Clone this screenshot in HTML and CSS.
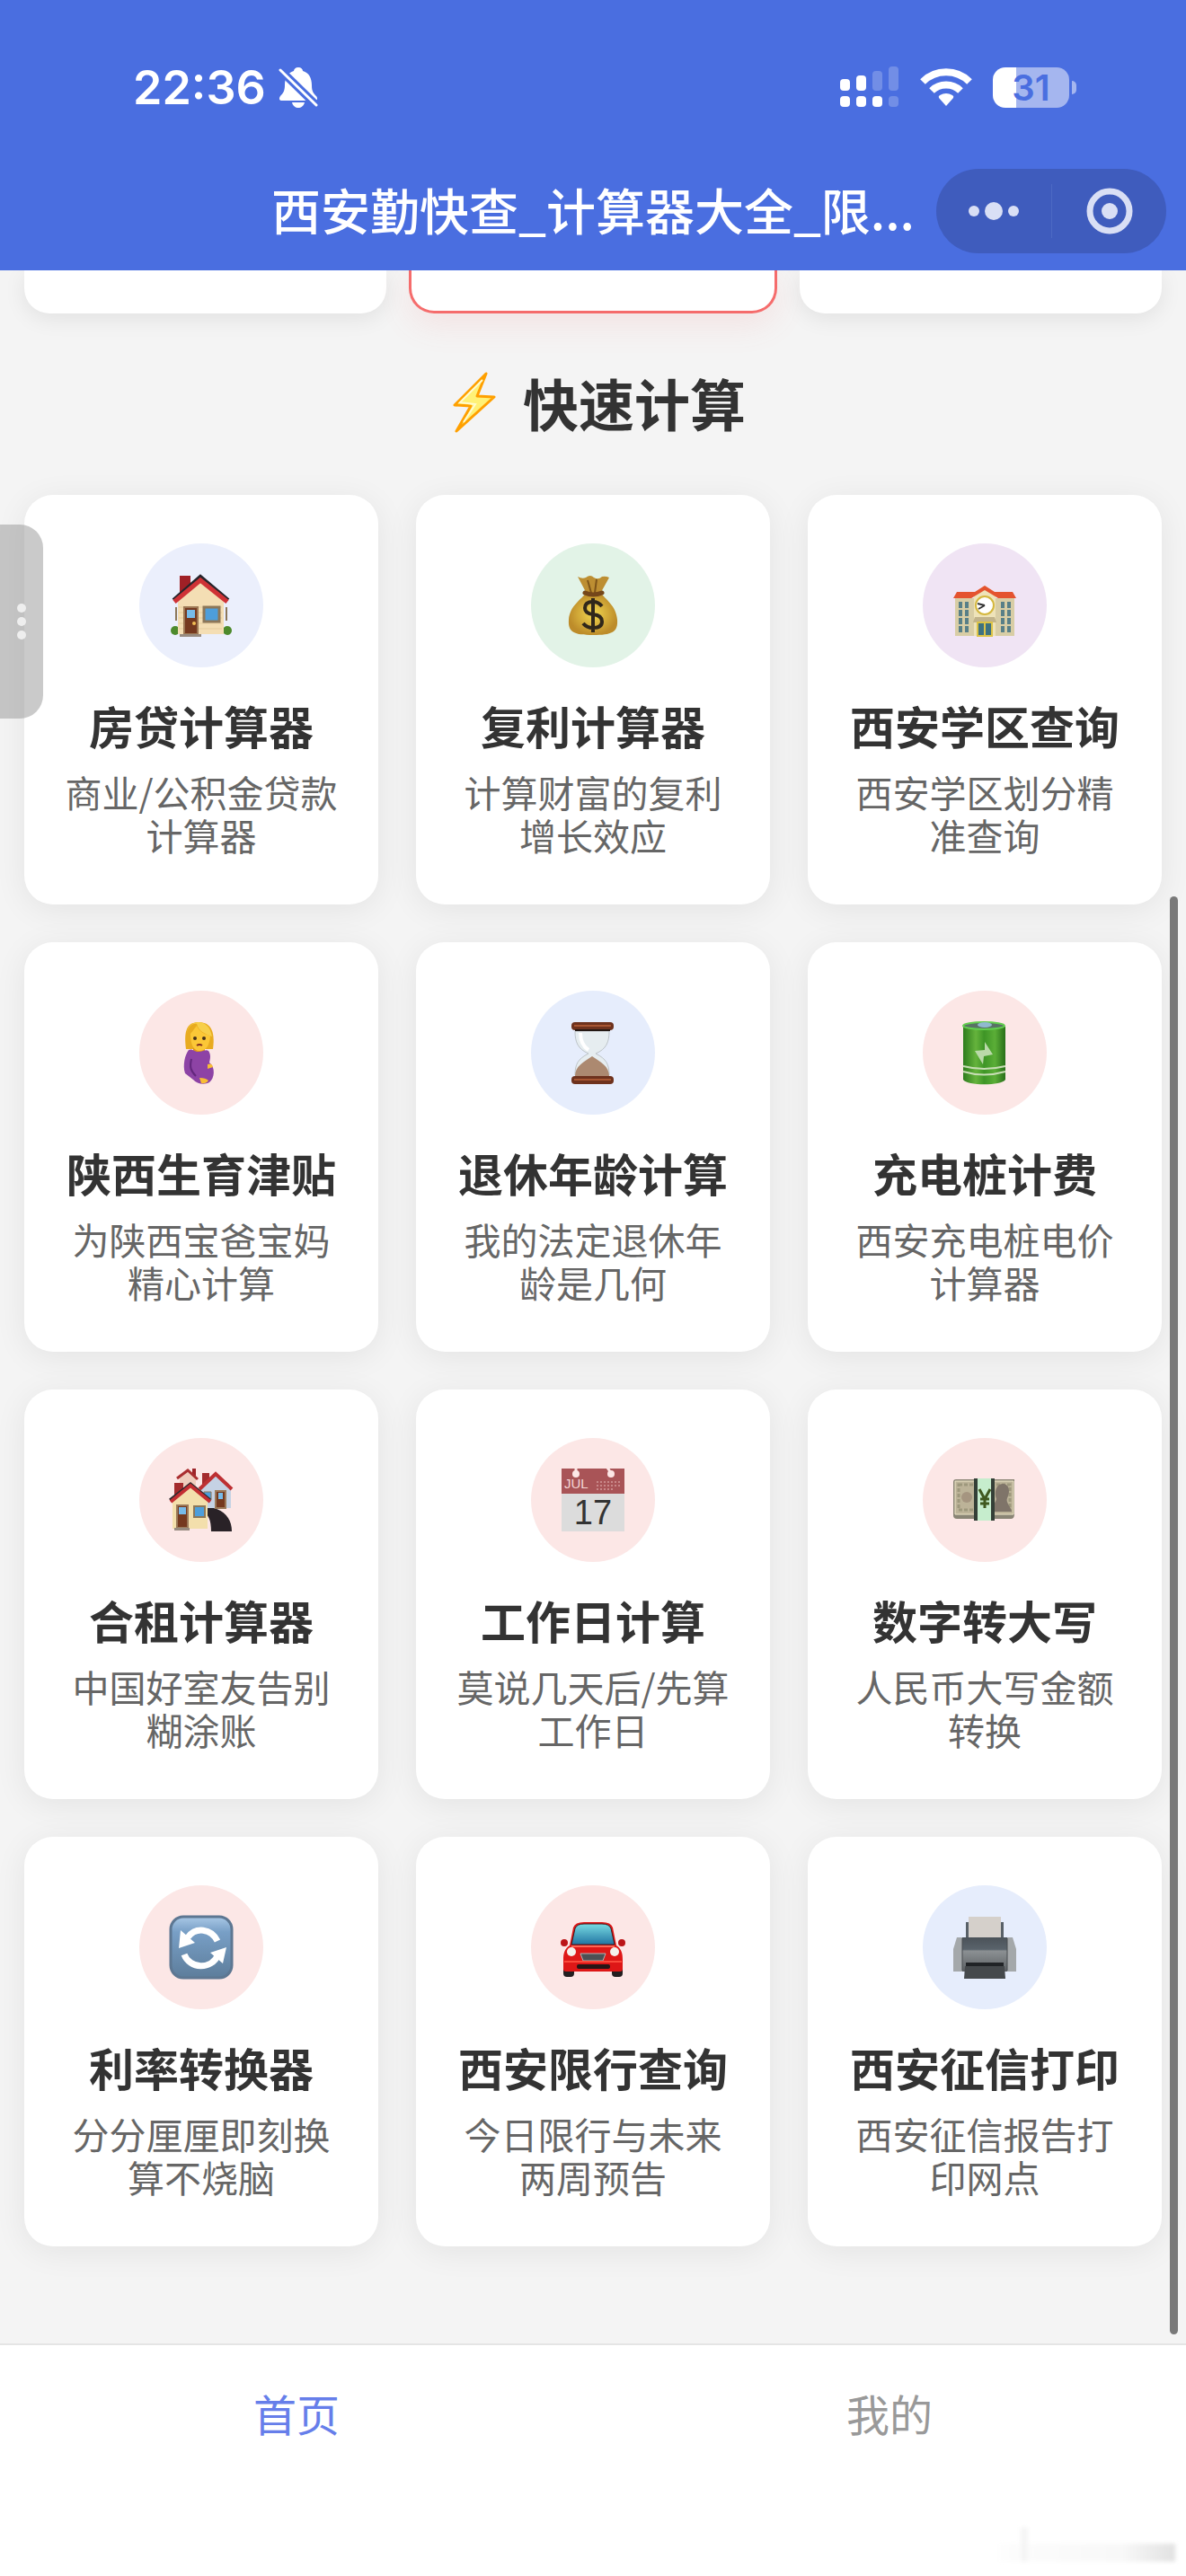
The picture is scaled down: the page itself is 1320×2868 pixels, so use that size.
FILE: index.html
```
<!DOCTYPE html>
<html lang="zh-CN">
<head>
  <meta charset="UTF-8">
  <meta name="viewport" content="width=device-width, initial-scale=1.0">
  <title>西安勤快查_计算器大全</title>
  <link rel="stylesheet" href="styles.css">
</head>
<body>

  <!-- Header -->
  <header>
    <div class="status-bar">
      <div class="status-left">
        <span class="time">22:36</span>
        <svg class="bell" viewBox="0 0 44 46">
          <path fill="#fff" d="M22 1c3 0 5 2 5 4 7 2 10 8 10 16 0 7 2 9 5 12 2 3 1 5-2 5H4c-3 0-4-2-2-5 3-3 5-6 5-12 0-8 3-14 10-16 0-2 2-4 5-4z"/>
          <path fill="#fff" d="M15 40h14c-1 4-4 6-7 6s-6-2-7-6z"/>
          <path stroke="#4a6ee0" stroke-width="9" d="M0 2l44 43"/>
          <path stroke="#fff" stroke-width="3" stroke-linecap="round" d="M2 4l40 39"/>
        </svg>
      </div>
      <div class="status-right">
        <svg class="signal" viewBox="0 0 66 46">
          <g fill="#fff">
            <rect x="0" y="14" width="11" height="13" rx="4"/>
            <rect x="18" y="10" width="11" height="17" rx="4"/>
            <rect x="0" y="33" width="11" height="12" rx="4"/>
            <rect x="18" y="33" width="11" height="12" rx="4"/>
            <rect x="36" y="33" width="11" height="12" rx="4"/>
          </g>
          <g fill="#fff" opacity=".22">
            <rect x="36" y="5" width="11" height="22" rx="4"/>
            <rect x="54" y="0" width="11" height="27" rx="4"/>
            <rect x="54" y="33" width="11" height="12" rx="4"/>
          </g>
        </svg>
        <svg class="wifi" viewBox="0 0 58 42">
          <g fill="none" stroke="#fff" stroke-width="8">
            <path d="M3 15a37 37 0 0 1 52 0"/>
            <path d="M13 25a23 23 0 0 1 32 0"/>
          </g>
          <path fill="#fff" d="M29 42l-8-9q-1-2 1-3 7-4 14 0 2 1 1 3z"/>
        </svg>
        <div class="battery"><span>31</span></div>
      </div>
    </div>
    <div class="nav-bar">
      <h1>西安勤快查_计算器大全_限...</h1>
      <div class="capsule">
        <button aria-label="更多">
          <svg viewBox="0 0 56 56" fill="#d9dff5"><circle cx="6" cy="28" r="6"/><circle cx="28" cy="28" r="10"/><circle cx="50" cy="28" r="6"/></svg>
        </button>
        <button aria-label="关闭">
          <svg viewBox="0 0 56 56"><circle cx="28" cy="28" r="22" fill="none" stroke="#d9dff5" stroke-width="7"/><circle cx="28" cy="28" r="9" fill="#d9dff5"/></svg>
        </button>
      </div>
    </div>
  </header>

  <main>
    <div class="top-cards">
      <div class="top-card"></div>
      <div class="top-card active"></div>
      <div class="top-card"></div>
    </div>

    <h2>
      <svg viewBox="0 0 48 68">
        <path d="M37 2L2 37l18 1L4 66l42-38-19-1z" fill="#fff176" stroke="#ffa000" stroke-width="3" stroke-linejoin="round"/>
        <path d="M33 9L8 34l17 2-13 20" fill="none" stroke="#fffbd0" stroke-width="2"/>
      </svg>
      <span>快速计算</span>
    </h2>

    <!-- Calculator list -->
    <section class="card-grid">
      <a href="#" class="card">
        <span class="icon indigo">
          <svg viewBox="0 0 72 72">
            <circle cx="7" cy="64" r="5" fill="#4d8a2c"/><circle cx="65" cy="64" r="5" fill="#4d8a2c"/>
            <path d="M12 3h12v22H12z" fill="#a02026"/>
            <path d="M10 27L35 6l26 22v40H10z" fill="#f4deb4"/>
            <path d="M11 38h48M11 44h48M11 50h48M11 56h48M11 62h48" stroke="#e5cc9c" stroke-width="1"/>
            <path d="M5 30L35 4l31 26" fill="none" stroke="#26242b" stroke-width="4"/>
            <path d="M6 32L35 8l30 24" fill="none" stroke="#cf3236" stroke-width="5"/>
            <path d="M17 38h15v30H17z" fill="#75391f" stroke="#9c7754" stroke-width="2"/>
            <path d="M20 41h9v9h-9z" fill="#77bbe9"/><circle cx="28" cy="56" r="2" fill="#f1bd55"/>
            <path d="M39 38h17v16H39z" fill="#4d9edb" stroke="#8c7759" stroke-width="3"/>
            <path d="M8 38v15M64 38v15" stroke="#8c7759" stroke-width="2"/>
            <path d="M12 68h24v3H12z" fill="#978b80"/>
          </svg>
        </span>
        <h3>房贷计算器</h3>
        <p>商业/公积金贷款计算器</p>
      </a>
      <a href="#" class="card">
        <span class="icon green">
          <svg viewBox="0 0 72 72">
            <defs><radialGradient id="bag"><stop offset="0" stop-color="#f3d84f"/><stop offset="1" stop-color="#bd8c2a"/></radialGradient></defs>
            <path d="M19 4q5 3 9 1 5-4 9 0 5 3 9-1 4-1 8 1l-10 18H29z" fill="#bd8e32"/>
            <path d="M30 8l4 14M40 7l-2 15" stroke="#7e5419" stroke-width="2"/>
            <path d="M28 22h17c4 7 17 14 18 30 1 14-6 17-27 17S8 66 9 52c1-16 15-23 19-30z" fill="url(#bag)"/>
            <path d="M27 22q9 4 19 0" fill="none" stroke="#75471a" stroke-width="5" stroke-linecap="round"/>
            <path d="M46 37q-4-5-10-5-9 0-9 7 0 6 9 7 10 1 10 8t-10 7q-7 0-11-5M36 28v38" fill="none" stroke="#30271b" stroke-width="4"/>
          </svg>
        </span>
        <h3>复利计算器</h3>
        <p>计算财富的复利增长效应</p>
      </a>
      <a href="#" class="card">
        <span class="icon purple">
          <svg viewBox="0 0 72 72">
            <path d="M3 28h66v42H3z" fill="#d8cda5"/>
            <path d="M24 22l12-8 12 8v48H24z" fill="#eee3b9"/>
            <path d="M1 28l4-7h20l11-7 11 7h20l4 7H51l-15-9-15 9z" fill="#e4532f"/>
            <path d="M7 32h4v7H7zm7 0h4v7h-4zM7 41h4v7H7zm7 0h4v7h-4zM7 50h4v7H7zm7 0h4v7h-4zM7 59h4v7H7zm7 0h4v7h-4zM54 32h4v7h-4zm7 0h4v7h-4zM54 41h4v7h-4zm7 0h4v7h-4zM54 50h4v7h-4zm7 0h4v7h-4zM54 59h4v7h-4zm7 0h4v7h-4z" fill="#587f88"/>
            <circle cx="36" cy="36" r="10" fill="#fff" stroke="#d4b73e" stroke-width="2"/>
            <path d="M36 36l-8-2m8 2l-7 4" stroke="#333" stroke-width="2"/>
            <path d="M25 49h22l2 6H23z" fill="#c1b38b"/>
            <path d="M28 55h16v15H28z" fill="#3e7180" stroke="#dcc347" stroke-width="2"/><path d="M36 55v15" stroke="#dcc347" stroke-width="2"/>
          </svg>
        </span>
        <h3>西安学区查询</h3>
        <p>西安学区划分精准查询</p>
      </a>

      <a href="#" class="card">
        <span class="icon red">
          <svg viewBox="0 0 72 72">
            <path d="M19 32C16 10 21 2 33 2s19 8 16 30z" fill="#e8ab20"/>
            <path d="M27 28h13v9H27z" fill="#df941b"/>
            <path d="M24 15c4-5 6-8 7-9 3 7 8 9 15 11-1 12-5 17-12 17s-10-8-10-19z" fill="#fbc737"/>
            <path d="M20 15c1-8 6-12 11-11 2 8 9 11 17 14-2-11-8-16-15-16S20 7 20 15z" fill="#f7cf4a"/>
            <circle cx="29" cy="20" r="2" fill="#45301a"/><circle cx="39" cy="20" r="2" fill="#45301a"/>
            <path d="M31 28q3-2 6 0" fill="none" stroke="#822c20" stroke-width="2"/>
            <path d="M22 33c4-2 6 2 11 2s8-3 11-1c3 4 2 9 1 13 7 5 6 18 0 22-5 3-14 2-18-3l-9-7c-3-9 0-21 4-26z" fill="#8d43a5"/>
            <path d="M25 43c-2 9-1 13 5 19" fill="none" stroke="#63277d" stroke-width="2"/>
            <path d="M34 64q7 0 10 3-3 4-8 3zM43 49q5-2 6 3l-6 2z" fill="#f8bd35"/>
          </svg>
        </span>
        <h3>陕西生育津贴</h3>
        <p>为陕西宝爸宝妈精心计算</p>
      </a>
      <a href="#" class="card">
        <span class="icon blue">
          <svg viewBox="0 0 72 72">
            <path d="M16 12h38c0 12-3 20-15 25 12 6 15 12 15 24H16c0-12 3-18 15-24C19 32 16 24 16 12z" fill="#e6edf0" stroke="#bdc4c8" stroke-width="1"/>
            <path d="M16 62c0-11 10-16 19-22 9 6 19 11 19 22z" fill="#ac8970"/>
            <path d="M22 14q0 13 9 19" fill="none" stroke="#fff" stroke-width="4"/>
            <rect x="12" y="2" width="47" height="9" rx="4" fill="#6e321d"/><rect x="12" y="62" width="47" height="9" rx="4" fill="#6e321d"/>
            <path d="M15 6h41M15 66h41" stroke="#a85632" stroke-width="2"/>
            <path d="M16 11h39" stroke="#241914" stroke-width="2"/>
          </svg>
        </span>
        <h3>退休年龄计算</h3>
        <p>我的法定退休年龄是几何</p>
      </a>
      <a href="#" class="card">
        <span class="icon red">
          <svg viewBox="0 0 72 72">
            <defs><linearGradient id="cell"><stop offset="0" stop-color="#2d7c1d"/><stop offset=".3" stop-color="#65b33c"/><stop offset=".5" stop-color="#3e9526"/><stop offset=".75" stop-color="#5bae37"/><stop offset="1" stop-color="#287019"/></linearGradient></defs>
            <path d="M12 7v59c4 7 43 7 47 0V7z" fill="url(#cell)"/>
            <path d="M12 51q23 6 47 0M12 57q23 7 47 0" fill="none" stroke="#c7ddb4" stroke-width="2"/>
            <ellipse cx="35" cy="6" rx="23" ry="4" fill="#597365" stroke="#62ce4e" stroke-width="2"/>
            <ellipse cx="36" cy="5" rx="8" ry="3" fill="#90b9cf"/>
            <path d="M36 24l9 14-10 2-1 9-9-15 11-1z" fill="#bad9a9"/>
          </svg>
        </span>
        <h3>充电桩计费</h3>
        <p>西安充电桩电价计算器</p>
      </a>

      <a href="#" class="card">
        <span class="icon red">
          <svg viewBox="0 0 72 72">
            <path d="M39 44c16-1 31 8 31 27H47c0-13-3-19-10-22z" fill="#292227"/>
            <path d="M12 11l10-8 8 8v10H12z" fill="#efcdbd"/><path d="M26 1h4v8h-4z" fill="#9d252a"/>
            <path d="M9 12l12-9 11 10" fill="none" stroke="#a92f30" stroke-width="3"/>
            <path d="M37 6h8v16h-8z" fill="#a42b2d"/>
            <path d="M36 22L52 8l17 14v23H36z" fill="#c5d2e4"/>
            <path d="M34 24L52 7l18 17" fill="none" stroke="#bd3033" stroke-width="4"/>
            <path d="M52 26h11v19H52z" fill="#75391f" stroke="#9b7959" stroke-width="2"/><path d="M55 28h5v7h-5z" fill="#77bbe9"/>
            <path d="M39 27h8v9h-8z" fill="#4d9edb" stroke="#8c7759"/>
            <path d="M6 17h10v18H6z" fill="#a42b2d"/>
            <path d="M4 34L24 18l19 17v33H4z" fill="#f3dfac"/>
            <path d="M1 36L24 18l22 18" fill="none" stroke="#2c282c" stroke-width="3"/>
            <path d="M2 38L24 20l22 18" fill="none" stroke="#c32e32" stroke-width="4"/>
            <path d="M9 42h12v25H9z" fill="#75391f" stroke="#9b7959" stroke-width="2"/><path d="M11 44h8v8h-8z" fill="#77bbe9"/>
            <path d="M28 43h12v12H28z" fill="#4d9edb" stroke="#8c7759" stroke-width="2"/>
            <path d="M6 67h17v3H6z" fill="#978b80"/>
          </svg>
        </span>
        <h3>合租计算器</h3>
        <p>中国好室友告别糊涂账</p>
      </a>
      <a href="#" class="card">
        <span class="icon red">
          <svg class="calendar" viewBox="0 0 72 72">
            <path d="M1 1h70v28H1z" fill="#a95457"/><path d="M1 29h70v42H1z" fill="#dcdcdc"/>
            <circle cx="17" cy="7" r="4" fill="#fde7e6"/><circle cx="56" cy="7" r="4" fill="#fde7e6"/>
            <path d="M17 0v6M52 0l4 6" stroke="#fde7e6" stroke-width="3"/>
            <path d="M40 16h28M40 20h28M40 24h20" stroke="#c98889" stroke-width="2" stroke-dasharray="2 2"/>
            <text x="4" y="23" font-size="15" fill="#f4d8d6">JUL</text>
            <text x="36" y="63" font-size="38" text-anchor="middle" fill="#333">17</text>
          </svg>
        </span>
        <h3>工作日计算</h3>
        <p>莫说几天后/先算工作日</p>
      </a>
      <a href="#" class="card">
        <span class="icon red">
          <svg viewBox="0 0 72 72">
            <path d="M1 16q0-3 3-3h65v39q0 5-4 5H5q-4 0-4-4z" fill="#8a8575"/>
            <path d="M3 15h65v37H3z" fill="#bcb398" stroke="#eee7c9" stroke-width="1"/>
            <path d="M7 19h57v28H7z" fill="none" stroke="#9d987c" stroke-width="3" stroke-dasharray="4 2"/>
            <circle cx="16" cy="33" r="6" fill="#a59580"/>
            <path d="M45 49c-1-7 3-10 4-14-3-8 0-17 7-17s9 8 5 16c-2 5 4 9 5 15z" fill="#7f7469"/>
            <path d="M24 12h23v47H24z" fill="#343f37"/><path d="M28 12h15v47H28z" fill="#c6edcd"/>
            <path d="M30 24l6 11 6-11M31 35h10M31 40h10M36 35v10" fill="none" stroke="#40591f" stroke-width="3"/>
          </svg>
        </span>
        <h3>数字转大写</h3>
        <p>人民币大写金额转换</p>
      </a>

      <a href="#" class="card">
        <span class="icon red">
          <svg viewBox="0 0 72 72">
            <defs><linearGradient id="tile" x2="0" y2="1"><stop offset="0" stop-color="#a9c8e6"/><stop offset=".25" stop-color="#789fc6"/><stop offset="1" stop-color="#5d7d9b"/></linearGradient></defs>
            <rect x="2" y="2" width="68" height="68" rx="14" fill="url(#tile)" stroke="#5d7792" stroke-width="3"/>
            <path d="M21 25c9-12 26-10 33 4M17 44c6 16 30 18 38 0" fill="none" stroke="#fff" stroke-width="7"/>
            <path d="M13 17l-2 20 18-6zM64 36l-18 6 14 12z" fill="#fff"/>
          </svg>
        </span>
        <h3>利率转换器</h3>
        <p>分分厘厘即刻换算不烧脑</p>
      </a>
      <a href="#" class="card">
        <span class="icon red">
          <svg viewBox="0 0 72 72">
            <defs><linearGradient id="glass" x2="0" y2="1"><stop offset="0" stop-color="#77dbe2"/><stop offset="1" stop-color="#2274a2"/></linearGradient></defs>
            <rect x="3" y="54" width="12" height="15" rx="4" fill="#231f20"/><rect x="57" y="54" width="12" height="15" rx="4" fill="#231f20"/>
            <path d="M10 34l4-20q2-6 12-6h20q10 0 12 6l4 20c6 4 7 9 7 16v10q0 3-3 3H6q-3 0-3-3V50c0-7 1-12 7-16z" fill="#de1717"/>
            <circle cx="4" cy="31" r="4" fill="#bb1518"/><circle cx="68" cy="31" r="4" fill="#bb1518"/>
            <path d="M12 33l4-18q2-5 10-5h20q8 0 10 5l4 18z" fill="url(#glass)" stroke="#42191b" stroke-width="1"/>
            <path d="M12 35h48" stroke="#ff6655" stroke-width="2"/>
            <circle cx="12" cy="41" r="5" fill="#f4f1ec"/><circle cx="60" cy="41" r="5" fill="#f4f1ec"/>
            <path d="M22 43h28l-3 8H25z" fill="#4c5054" stroke="#b4b4b4" stroke-width="1"/>
            <path d="M4 52h64" stroke="#fa4a3b" stroke-width="2"/>
            <rect x="18" y="55" width="37" height="5" rx="2" fill="#271516"/>
          </svg>
        </span>
        <h3>西安限行查询</h3>
        <p>今日限行与未来两周预告</p>
      </a>
      <a href="#" class="card">
        <span class="icon blue">
          <svg viewBox="0 0 72 72">
            <defs><linearGradient id="printer" x2="0" y2="1"><stop offset="0" stop-color="#4b5259"/><stop offset=".35" stop-color="#59636b"/><stop offset=".4" stop-color="#8b9093"/><stop offset="1" stop-color="#5c6063"/></linearGradient></defs>
            <path d="M15 8h42v18H15z" fill="#596168"/><path d="M18 2h36v24H18z" fill="#d5d0cb"/>
            <path d="M5 25h62l4 13v25H1V38z" fill="#a4a8aa"/>
            <path d="M11 25h50v38H11z" fill="url(#printer)"/>
            <path d="M15 53h42v9H15z" fill="#202326"/>
            <path d="M14 57h44l1 14H13z" fill="#45494c"/>
            <path d="M11 26v36M61 26v36" stroke="#484d51" stroke-width="1"/>
          </svg>
        </span>
        <h3>西安征信打印</h3>
        <p>西安征信报告打印网点</p>
      </a>
    </section>

    <button class="side-handle" aria-label="展开"><i></i><i></i><i></i></button>
    <div class="scrollbar"></div>
  </main>

  <!-- Tab bar -->
  <nav class="tab-bar">
    <a href="#" class="active">首页</a>
    <a href="#">我的</a>
    <div class="smudge"></div>
  </nav>

</body>
</html>
```
FILE: styles.css
```
/* General Styles */
* {
  box-sizing: border-box;
}

body {
  font-family: "Noto Sans CJK SC", sans-serif;
  margin: 0;
  min-height: 100vh;
  display: flex;
  flex-direction: column;
  background-color: #f4f4f4;
  color: #333;
}

h1, h2, h3, p {
  margin: 0;
}

a {
  text-decoration: none;
}

button {
  border: none;
  padding: 0;
  background: none;
  cursor: pointer;
}

svg {
  display: block;
}

/* Header */
header {
  background-color: #4a6ee0;
  color: white;
  padding: 66px 22px 19px;
}

.status-bar {
  display: flex;
  justify-content: space-between;
  align-items: center;
  height: 62px;
  padding: 0 108px 0 126px;
}

.status-left, .status-right {
  display: flex;
  align-items: center;
}

.status-left {
  gap: 14px;
}

.status-right {
  gap: 23px;
}

.time {
  font-family: Inter, sans-serif;
  font-size: 52px;
  font-weight: 600;
}

.bell {
  width: 44px;
  height: 46px;
}

.signal {
  width: 66px;
  height: 46px;
}

.wifi {
  width: 58px;
  height: 42px;
}

.battery {
  position: relative;
  width: 85px;
  height: 45px;
  border-radius: 14px;
  background: linear-gradient(to right, #fff 31%, #a5b6ef 31%);
  color: #4a6ee0;
  font-family: Inter, sans-serif;
  font-size: 40px;
  font-weight: 600;
  line-height: 45px;
  text-align: center;
}

.battery::after {
  content: "";
  position: absolute;
  right: -8px;
  top: 15px;
  width: 5px;
  height: 15px;
  border-radius: 0 5px 5px 0;
  background-color: #a5b6ef;
}

.nav-bar {
  display: grid;
  grid-template-columns: 256px 1fr 256px;
  align-items: center;
  margin-top: 60px;
}

.nav-bar h1 {
  grid-column: 2;
  padding-bottom: 6px;
  font-size: 55px;
  font-weight: 500;
  line-height: 80px;
  white-space: nowrap;
  text-align: center;
}

.capsule {
  display: flex;
  height: 94px;
  border-radius: 47px;
  background-color: #3f5cbd;
}

.capsule button {
  flex: 1;
  display: flex;
  align-items: center;
  justify-content: center;
}

.capsule button + button::before {
  content: "";
  width: 1px;
  height: 60px;
  margin-right: 36px;
  background-color: #4d69c4;
}

.capsule button + button {
  justify-content: flex-start;
}

.capsule svg {
  width: 56px;
  height: 56px;
}

/* Content */
main {
  position: relative;
  flex: 1;
  overflow: hidden;
  padding: 0 27px;
}

.top-cards {
  display: flex;
  gap: 25px;
}

.top-card {
  flex: 1;
  height: 48px;
  border-radius: 0 0 28px 28px;
  background-color: white;
  box-shadow: 0 6px 24px rgba(0, 0, 0, 0.08);
}

.top-card.active {
  border: 3px solid #f56c6c;
  border-top: none;
  box-shadow: 0 12px 36px rgba(245, 108, 108, 0.12);
}

h2 {
  display: flex;
  justify-content: center;
  align-items: center;
  gap: 30px;
  padding: 53px 0 57px 14px;
  font-size: 62px;
  line-height: 92px;
}

h2 svg {
  width: 48px;
  height: 68px;
}

.card-grid {
  display: grid;
  grid-template-columns: repeat(3, 1fr);
  gap: 42px;
}

.card {
  display: flex;
  flex-direction: column;
  align-items: center;
  padding: 54px 36px;
  border-radius: 32px;
  background-color: white;
  box-shadow: 0 6px 36px rgba(0, 0, 0, 0.07);
  text-align: center;
}

.icon {
  display: flex;
  align-items: center;
  justify-content: center;
  width: 138px;
  height: 138px;
  border-radius: 50%;
}

.icon svg {
  width: 72px;
  height: 72px;
}

.indigo {
  background-color: #ebeffc;
}

.green {
  background-color: #e2f3e7;
}

.purple {
  background-color: #f0e4f4;
}

.red {
  background-color: #fce7e6;
}

.blue {
  background-color: #e6edfc;
}

.calendar {
  font-family: "Liberation Sans", sans-serif;
}

.card h3 {
  margin-top: 30px;
  font-size: 50px;
  line-height: 68px;
  color: #333;
  white-space: nowrap;
}

.card p {
  margin-top: 16px;
  font-size: 41px;
  line-height: 48px;
  color: #666;
}

.side-handle {
  position: absolute;
  left: 0;
  top: 283px;
  width: 48px;
  height: 216px;
  display: flex;
  flex-direction: column;
  align-items: center;
  justify-content: center;
  gap: 5px;
  border-radius: 0 26px 26px 0;
  background-color: rgba(150, 150, 150, 0.5);
}

.side-handle i {
  width: 10px;
  height: 10px;
  border-radius: 50%;
  background-color: #eee;
}

.scrollbar {
  position: absolute;
  right: 9px;
  bottom: 10px;
  width: 9px;
  height: 1601px;
  border-radius: 5px;
  background-color: #797979;
}

/* Tab bar */
.tab-bar {
  position: relative;
  display: flex;
  height: 259px;
  padding-top: 41px;
  border-top: 2px solid #e5e5e5;
  background-color: white;
}

.tab-bar a {
  flex: 1;
  font-size: 48px;
  line-height: 68px;
  text-align: center;
  color: #999;
}

.tab-bar a.active {
  color: #667eea;
}

.smudge {
  position: absolute;
  right: 12px;
  bottom: 16px;
  width: 196px;
  height: 20px;
  background: linear-gradient(to right, #fdfdfd, #f8f8f8 70%, #e2e2e2);
  filter: blur(2px);
}

.smudge::before {
  content: "";
  position: absolute;
  left: 24px;
  bottom: 0;
  width: 8px;
  height: 38px;
  background-color: #f5f5f5;
}
```
